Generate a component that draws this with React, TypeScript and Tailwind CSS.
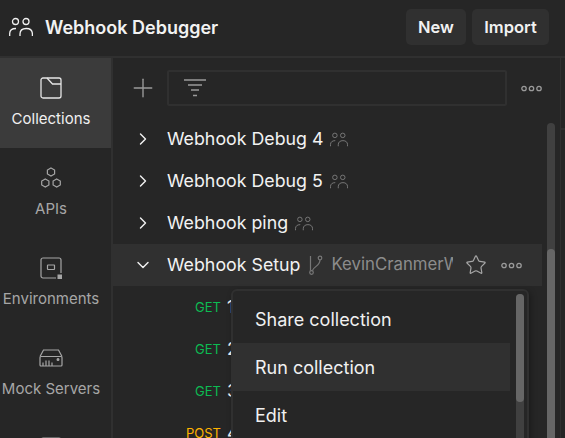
import { ChevronDown, ChevronRight, Plus, Star } from "lucide-react";

const PeopleIcon = ({ className }: { className: string }) => (
  <svg viewBox="0 0 24 20" fill="none" stroke="currentColor" strokeWidth="1.3" className={className}>
    <circle cx="6.500" cy="4.500" r="3" />
    <circle cx="17" cy="4.500" r="3" />
    <path d="M0.700 19 V16.500 C0.700 13.500 3 11.500 7 11.500" />
    <path d="M11 19 V17 C11 13.500 13.500 11.500 17.300 11.500 C21 11.500 23.400 13.500 23.400 17 V19" />
  </svg>
);

const Dots = () => (
  <svg viewBox="0 0 21 7" fill="none" stroke="currentColor" strokeWidth="1.3" className="h-[7px] w-[21px] text-[#9a9a9a]">
    <circle cx="3" cy="3.500" r="2.200" />
    <circle cx="10.500" cy="3.500" r="2.200" />
    <circle cx="18" cy="3.500" r="2.200" />
  </svg>
);

const CollectionsIcon = () => (
  <svg viewBox="0 0 22 22" fill="none" stroke="currentColor" strokeWidth="1.3" className="h-[22px] w-[22px] text-[#e6e6e6]">
    <rect x="1" y="1" width="20" height="20" rx="2" />
    <path d="M7 1 L12.500 7 H21" />
  </svg>
);

const ApisIcon = () => (
  <svg viewBox="0 0 22 22" fill="none" stroke="currentColor" strokeWidth="1.2" className="h-[22px] w-[22px]">
    <path d="M11 1 L14.600 3 V7 L11 9 L7.400 7 V3 Z" />
    <path d="M5.300 12 L8.900 14 V18 L5.300 20 L1.700 18 V14 Z" />
    <path d="M16.700 12 L20.300 14 V18 L16.700 20 L13.100 18 V14 Z" />
  </svg>
);

const EnvironmentsIcon = () => (
  <svg viewBox="0 0 22 22" fill="none" stroke="currentColor" strokeWidth="1.2" className="h-[22px] w-[22px]">
    <path d="M16 21 H3 C1.900 21 1 20.100 1 19 V3 C1 1.900 1.900 1 3 1 H19 C20.100 1 21 1.900 21 3 V16" />
    <rect x="7.500" y="8" width="7" height="4.500" rx="0.500" />
    <rect x="17.500" y="17.500" width="4.500" height="4.500" fill="currentColor" stroke="none" />
  </svg>
);

const MockIcon = () => (
  <svg viewBox="0 0 24 18" fill="none" stroke="currentColor" strokeWidth="1.2" className="h-[18px] w-6">
    <path d="M1 7.500 L4.500 1 H19.500 L23 7.500" />
    <rect x="1" y="7.500" width="22" height="9.500" rx="1" />
    <path d="M4 13.500 V17 M7 11.500 V17 M10 11.500 V17 M13 13.500 V17" />
    <circle cx="19" cy="10.500" r="0.900" fill="currentColor" />
  </svg>
);

const ForkIcon = () => (
  <svg viewBox="0 0 14 20" fill="none" stroke="currentColor" strokeWidth="1.2" className="h-5 w-[14px] text-[#777777]">
    <circle cx="2.500" cy="17.500" r="1.800" />
    <circle cx="11" cy="3" r="1.800" />
    <path d="M1.500 1 V15.500 M3.500 15.500 C5 11 11 11 11 5" />
  </svg>
);

const FilterIcon = () => (
  <svg viewBox="0 0 22 18" fill="none" stroke="currentColor" strokeWidth="1.4" className="h-[18px] w-[22px] text-[#9a9a9a]">
    <path d="M0 1 H22 M4 6 H18 M7 11 H15 M9 16.500 H13" />
  </svg>
);

const navItems = [
  { label: "Collections", icon: <CollectionsIcon />, active: true },
  { label: "APIs", icon: <ApisIcon />, active: false },
  { label: "Environments", icon: <EnvironmentsIcon />, active: false },
  { label: "Mock Servers", icon: <MockIcon />, active: false },
  { label: "Monitors", icon: <EnvironmentsIcon />, active: false },
];

const collections = ["Webhook Debug 4", "Webhook Debug 5", "Webhook ping"];

const requests = [
  { method: "GET", name: "1", color: "text-[#0cbb52]" },
  { method: "GET", name: "2", color: "text-[#0cbb52]" },
  { method: "GET", name: "3", color: "text-[#0cbb52]" },
  { method: "POST", name: "4", color: "text-[#ffb400]" },
];

export default function App() {
  return (
    <div className="relative flex h-[438px] w-[565px] flex-col overflow-hidden bg-[#262626] font-['Inter',sans-serif] text-[#f2f2f2]">
      <header className="flex h-[58px] shrink-0 items-center border-b-2 border-[#303030] pb-[2px] pl-[9px] pr-[16px]">
        <PeopleIcon className="h-5 w-6 text-[#f0f0f0]" />
        <h1 className="ml-[12px] text-[18px] font-semibold">Webhook Debugger</h1>
        <div className="ml-auto flex gap-[6px]">
          <button className="h-[36px] w-[60px] rounded-[5px] bg-[#303030] text-[16.500px] font-semibold">New</button>
          <button className="h-[36px] w-[77px] rounded-[5px] bg-[#303030] text-[16.500px] font-semibold">Import</button>
        </div>
      </header>

      <div className="flex min-h-0 flex-1">
        <nav className="w-[113px] shrink-0 border-r-2 border-[#303030]">
          {navItems.map((item) => (
            <div
              key={item.label}
              className={`flex h-[90px] flex-col items-center pr-[9px] pt-[19px] text-[15px] ${
                item.active ? "bg-[#3b3b3b] text-[#f0f0f0]" : "text-[#a6a6a6]"
              }`}
            >
              <div className="flex h-[22px] items-center justify-center">{item.icon}</div>
              <span className="mt-[10px] whitespace-nowrap leading-[20px]">{item.label}</span>
            </div>
          ))}
        </nav>

        <main className="relative min-w-0 flex-1 pr-[18px]">
          <div className="flex h-[60px] items-center pl-[15px]">
            <Plus className="h-[30px] w-[30px] text-[#9a9a9a]" strokeWidth={1.100} />
            <div className="ml-[9px] flex h-[36px] w-[340px] items-center rounded-[2px] border-2 border-[#303030] pl-[15px]">
              <FilterIcon />
            </div>
            <div className="ml-[14px]">
              <Dots />
            </div>
          </div>

          {collections.map((name) => (
            <div key={name} className="flex h-[42px] items-center pl-[20px]">
              <ChevronRight className="h-5 w-5 text-[#f0f0f0]" strokeWidth={1.700} />
              <span className="ml-[14px] text-[17.800px]">{name}</span>
              <PeopleIcon className="ml-[7px] h-[15px] w-[18px] text-[#777777]" />
            </div>
          ))}

          <div className="flex h-[42px] items-center bg-[#303030] pl-[20px]">
            <ChevronDown className="h-5 w-5 text-[#f0f0f0]" strokeWidth={1.700} />
            <span className="ml-[14px] text-[17.800px]">Webhook Setup</span>
            <div className="ml-[9px]">
              <ForkIcon />
            </div>
            <span className="ml-[8px] w-[122px] overflow-hidden whitespace-nowrap text-[16.800px] text-[#8c8c8c]">
              KevinCranmerWorkspace
            </span>
            <Star className="ml-[12px] h-[22px] w-[22px] text-[#a6a6a6]" strokeWidth={1.300} />
            <div className="ml-[14px]">
              <Dots />
            </div>
          </div>

          {requests.map((r) => (
            <div key={r.name} className="flex h-[42px] items-center">
              <span className={`w-[108px] pt-[1px] text-right text-[13px] ${r.color}`}>{r.method}</span>
              <span className="ml-[6px] text-[17.800px]">{r.name}</span>
            </div>
          ))}

          {/* list scrollbar */}
          <div className="absolute right-[5px] top-[65px] h-[320px] w-[8px] rounded-[4px] bg-[#404040]" />
          <div className="absolute right-[5px] top-[191px] h-[200px] w-[8px] rounded-[4px] bg-[#666666]" />

          {/* collection menu */}
          <div className="absolute left-[118px] top-[231px] h-[200px] w-[298px] rounded-[6px] border-2 border-[#303030] bg-[#262626] pt-[4px] shadow-[2px_2px_6px_rgba(0,0,0,0.3)]">
            <div className="w-[277px] text-[18px] text-[#f0f0f0]">
              <div className="flex h-[48px] items-center pl-[22px]">Share collection</div>
              <div className="flex h-[48px] items-center bg-[#303030] pl-[22px]">Run collection</div>
              <div className="flex h-[48px] items-center pl-[22px]">Edit</div>
            </div>
            <div className="absolute right-[3px] top-[3px] h-[200px] w-[8px] rounded-[4px] bg-[#404040]" />
            <div className="absolute right-[3px] top-[3px] h-[108px] w-[8px] rounded-[4px] bg-[#666666]" />
          </div>
        </main>

        <aside className="w-[5px] shrink-0 border-l border-[#303030]">
          <div className="mt-[70px] h-[2px] bg-[#303030]" />
        </aside>
      </div>
    </div>
  );
}
